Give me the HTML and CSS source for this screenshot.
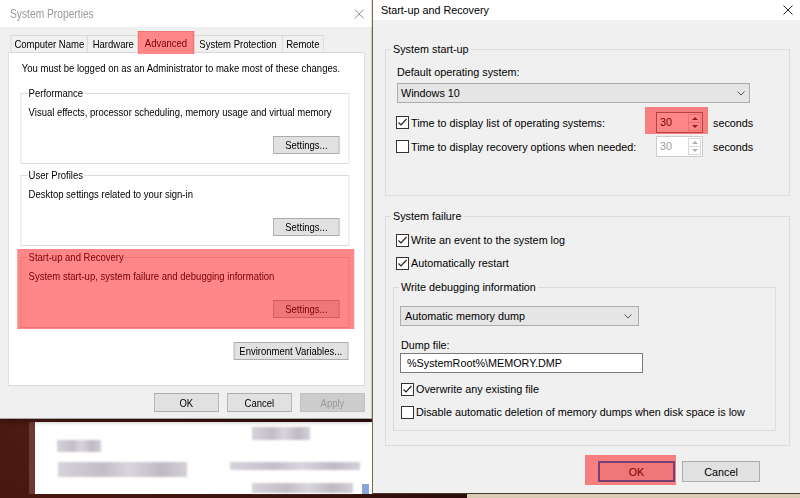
FILE: index.html
```html
<!DOCTYPE html>
<html lang="en">
<head>
    <meta charset="UTF-8">
    <title>System Properties - Start-up and Recovery</title>
    <link rel="stylesheet" href="styles.css">
</head>
<body>

    <!-- window sitting behind the dialogs (blurred in the screenshot) -->
    <div class="backdrop-window">
        <span class="smudge sm1"></span>
        <span class="smudge sm2"></span>
        <span class="smudge sm3"></span>
        <span class="smudge sm4"></span>
        <span class="smudge sm5"></span>
        <span class="app-icon"></span>
    </div>
    <div class="backdrop-edge"></div>

    <section class="dialog sysprops">
        <header class="titlebar">
            <span class="title">System Properties</span>
            <svg class="close" width="12.2" height="10" viewBox="0 0 10 10" preserveAspectRatio="none"><path d="M0.5 0.5 L9.5 9.5 M9.5 0.5 L0.5 9.5"/></svg>
        </header>

        <nav class="tabs">
            <span class="tab tab-name">Computer Name</span>
            <span class="tab tab-hw">Hardware</span>
            <span class="tab tab-adv active">Advanced</span>
            <span class="tab tab-sp">System Protection</span>
            <span class="tab tab-remote">Remote</span>
        </nav>

        <div class="panel">
            <p class="note">You must be logged on as an Administrator to make most of these changes.</p>

            <fieldset class="group">
                <legend>Performance</legend>
                <p>Visual effects, processor scheduling, memory usage and virtual memory</p>
                <div class="group-actions"><button class="btn btn-settings">Settings...</button></div>
            </fieldset>

            <fieldset class="group">
                <legend>User Profiles</legend>
                <p>Desktop settings related to your sign-in</p>
                <div class="group-actions"><button class="btn btn-settings">Settings...</button></div>
            </fieldset>

            <fieldset class="group">
                <legend>Start-up and Recovery</legend>
                <p>System start-up, system failure and debugging information</p>
                <div class="group-actions"><button class="btn btn-settings">Settings...</button></div>
            </fieldset>

            <div class="env-row"><button class="btn btn-env">Environment Variables...</button></div>
        </div>

        <footer class="dialog-buttons">
            <button class="btn">OK</button>
            <button class="btn">Cancel</button>
            <button class="btn" disabled>Apply</button>
        </footer>

        <span class="highlight hl-tab"></span>
        <span class="highlight hl-group"></span>
    </section>

    <section class="dialog recovery">
        <header class="titlebar">
            <span class="title">Start-up and Recovery</span>
            <svg class="close" width="10" height="10" viewBox="0 0 10 10"><path d="M0.5 0.5 L9.5 9.5 M9.5 0.5 L0.5 9.5"/></svg>
        </header>

        <div class="content">
            <fieldset class="group startup">
                <legend>System start-up</legend>
                <div class="field-label">Default operating system:</div>
                <div class="select select-os">
                    <span>Windows 10</span>
                    <svg width="8" height="5" viewBox="0 0 8 5"><path d="M0.5 0.5 L4 4 L7.5 0.5"/></svg>
                </div>

                <div class="spin-row">
                    <label class="check">
                        <span class="box"><svg width="11" height="11" viewBox="0 0 11 11"><path d="M1.5 5.5 L4 8 L9.5 2"/></svg></span>
                        Time to display list of operating systems:
                    </label>
                    <div class="spin">
                        <span class="spin-value">30</span>
                        <span class="spin-btns"><i class="up"></i><i class="down"></i></span>
                    </div>
                    <span class="unit">seconds</span>
                </div>

                <div class="spin-row">
                    <label class="check">
                        <span class="box"></span>
                        Time to display recovery options when needed:
                    </label>
                    <div class="spin disabled">
                        <span class="spin-value">30</span>
                        <span class="spin-btns"><i class="up"></i><i class="down"></i></span>
                    </div>
                    <span class="unit">seconds</span>
                </div>
            </fieldset>

            <fieldset class="group failure">
                <legend>System failure</legend>
                <label class="check">
                    <span class="box"><svg width="11" height="11" viewBox="0 0 11 11"><path d="M1.5 5.5 L4 8 L9.5 2"/></svg></span>
                    Write an event to the system log
                </label>
                <label class="check">
                    <span class="box"><svg width="11" height="11" viewBox="0 0 11 11"><path d="M1.5 5.5 L4 8 L9.5 2"/></svg></span>
                    Automatically restart
                </label>

                <fieldset class="group debug">
                    <legend>Write debugging information</legend>
                    <div class="select select-dump">
                        <span>Automatic memory dump</span>
                        <svg width="8" height="5" viewBox="0 0 8 5"><path d="M0.5 0.5 L4 4 L7.5 0.5"/></svg>
                    </div>
                    <div class="field-label dump-label">Dump file:</div>
                    <div class="textbox">%SystemRoot%\MEMORY.DMP</div>
                    <label class="check">
                        <span class="box"><svg width="11" height="11" viewBox="0 0 11 11"><path d="M1.5 5.5 L4 8 L9.5 2"/></svg></span>
                        Overwrite any existing file
                    </label>
                    <label class="check">
                        <span class="box"></span>
                        Disable automatic deletion of memory dumps when disk space is low
                    </label>
                </fieldset>
            </fieldset>

            <div class="dialog-buttons">
                <button class="btn btn-default">OK</button>
                <button class="btn btn-cancel">Cancel</button>
            </div>
        </div>

        <span class="highlight hl-spin"></span>
        <span class="highlight hl-ok"></span>
    </section>

</body>
</html>
```

FILE: styles.css
```css
* {
    box-sizing: border-box;
}

body {
    margin: 0;
    width: 800px;
    height: 498px;
    overflow: hidden;
    position: relative;
    background: radial-gradient(circle at 5% 85%, #4d1b12, #240908 60%);
    font-family: "Liberation Sans", Arial, sans-serif;
    color: #000;
}

p {
    margin: 0;
}

button {
    font: inherit;
    color: #000;
    padding: 0;
}

.btn {
    background: #e1e1e1;
    border: 1px solid #adadad;
    text-align: center;
    white-space: nowrap;
}

.btn:disabled {
    background: #cccccc;
    border-color: #bfbfbf;
    color: #9a9a9a;
}

fieldset.group {
    margin: 0;
    min-width: 0;
    border: 1px solid #dcdcdc;
}

legend {
    line-height: 14px;
}

.highlight {
    position: absolute;
    z-index: 5;
    background: rgba(255, 0, 0, 0.47);
    pointer-events: none;
}

.close path,
.select path {
    fill: none;
    stroke-width: 1;
}

/* ---------- things behind the dialogs ---------- */

.backdrop-window {
    position: absolute;
    left: 29px;
    top: 422px;
    width: 360px;
    height: 72px;
    background: #fff;
    border-left: 6px solid #6d3a31;
}

.smudge {
    position: absolute;
    background: linear-gradient(90deg, #d6d2da, #c3bdc8 35%, #d9d5dd 55%, #bfb9c4 80%, #d4d0d8);
    filter: blur(0.8px);
}

.sm1 { left: 22px; top: 18px; width: 44px; height: 12px; }
.sm2 { left: 23px; top: 40px; width: 129px; height: 15px; }
.sm3 { left: 217px; top: 5px; width: 58px; height: 13px; }
.sm4 { left: 195px; top: 40px; width: 130px; height: 8px; }
.sm5 { left: 217px; top: 61px; width: 101px; height: 10px; }

.app-icon {
    position: absolute;
    left: 327px;
    top: 62px;
    width: 7px;
    height: 10px;
    background: #8aa6d8;
    filter: blur(0.6px);
}

.backdrop-edge {
    position: absolute;
    left: 467px;
    top: 494px;
    width: 333px;
    height: 4px;
    background: #d9cbb4;
}

/* ---------- common dialog ---------- */

.dialog {
    position: absolute;
    top: 0;
    background: #f0f0f0;
    line-height: 14px;
}

.titlebar {
    display: flex;
    align-items: center;
    justify-content: space-between;
    background: #fff;
}

/* ---------- System Properties ---------- */
/* the screenshot squeezes this dialog sideways, so it is laid out
   wider and narrowed with scaleX(0.82); horizontal sizes are /0.82 */

.sysprops {
    left: 0;
    width: 453.7px;
    height: 419px;
    transform: scaleX(0.82);
    transform-origin: 0 0;
    border-right: 1px solid #a8a8a8;
    border-bottom: 1px solid #a8a8a8;
    box-shadow: 0 2px 6px rgba(0, 0, 0, 0.4);
    font-size: 11.6px;
    white-space: nowrap;
}

.sysprops .titlebar {
    height: 27px;
    padding: 0 8.5px 0 12.2px;
}

.sysprops .title {
    font-size: 12.5px;
    color: #999;
}

.sysprops .close path {
    stroke: #8a8a8a;
}

.tabs {
    display: flex;
    align-items: flex-end;
    height: 25px;
    padding-left: 13.4px;
}

.tab {
    display: flex;
    align-items: center;
    justify-content: center;
    height: 17px;
    border: 1px solid #d9d9d9;
    border-bottom: none;
    margin-left: -1px;
}

.tab-name { width: 93.5px; margin-left: 0; }
.tab-hw { width: 64.5px; }
.tab-sp { width: 109.5px; }
.tab-remote { width: 51px; }

.tab.active {
    position: relative;
    z-index: 1;
    width: 68px;
    height: 22px;
    margin-left: -2px;
    margin-bottom: -1px;
    background: #fff;
}

.panel {
    width: 435.4px;
    height: 334px;
    margin-left: 9.8px;
    padding: 8px 18.3px 0 14.6px;
    background: #fff;
    border: 1px solid #d9d9d9;
}

.note {
    margin: 0 0 11px 1.2px;
}

.sysprops .group {
    padding: 0 11px 9px 7.3px;
    margin-top: 4px;
}

.sysprops .group legend {
    padding: 0 1.2px;
}

.sysprops .group p {
    margin: 5px 0 0 1.2px;
}

.group-actions {
    display: flex;
    justify-content: flex-end;
    margin-top: 17px;
}

.btn-settings {
    width: 80.5px;
    height: 18px;
}

.env-row {
    display: flex;
    justify-content: flex-end;
    margin-top: 14px;
    padding-right: 1.2px;
}

.btn-env {
    width: 140.2px;
    height: 18px;
}

.sysprops .dialog-buttons {
    display: flex;
    justify-content: flex-end;
    gap: 9.8px;
    margin-top: 7px;
    padding-right: 7.6px;
}

.sysprops .dialog-buttons .btn {
    width: 79.3px;
    height: 19px;
}

.hl-tab { left: 168.3px; top: 31px; width: 68.3px; height: 23px; }
.hl-group { left: 20.7px; top: 249px; width: 411px; height: 80px; }

/* ---------- Start-up and Recovery ---------- */

.recovery {
    left: 372px;
    width: 428px;
    height: 494px;
    border-left: 1px solid #7a6548;
    border-bottom: 1px solid #4a3a2c;
    font-size: 10.8px;
}

.recovery .titlebar {
    height: 20px;
    padding: 0 7px 0 8px;
}

.recovery .close path {
    stroke: #222;
}

.content {
    padding: 22px 10px 0 12px;
}

.recovery .group legend {
    padding: 0 2px;
}

.startup {
    padding: 0 10px 38px 5px;
}

.field-label {
    margin: 9px 0 0 6px;
}

.select {
    display: flex;
    align-items: center;
    justify-content: space-between;
    height: 20px;
    background: #e5e5e5;
    border: 1px solid #adadad;
}

.select path {
    stroke: #555;
}

.select-os {
    width: 353px;
    margin: 4px 0 0 6px;
    padding: 0 4px 0 3px;
}

.spin-row {
    display: flex;
    align-items: center;
    height: 21px;
    margin: 9px 0 0 5px;
}

.spin-row + .spin-row {
    margin-top: 3px;
}

.check {
    display: flex;
    align-items: center;
    gap: 2px;
    height: 16px;
}

.spin-row .check {
    width: 260px;
}

.box {
    display: flex;
    align-items: center;
    justify-content: center;
    width: 13px;
    height: 13px;
    background: #fff;
    border: 1px solid #333;
}

.box path {
    fill: none;
    stroke: #222;
    stroke-width: 1.2;
}

.spin {
    display: flex;
    width: 47px;
    height: 21px;
    background: #fff;
    border: 1px solid #7a7a7a;
}

.spin-value {
    flex: 1;
    padding-left: 3px;
    line-height: 19px;
}

.spin-btns {
    display: flex;
    flex-direction: column;
    width: 15px;
    padding: 1px;
}

.spin-btns i {
    flex: 1;
    display: flex;
    align-items: center;
    justify-content: center;
    border: 1px solid #dadada;
}

.spin-btns .down {
    border-top: none;
}

.spin-btns .up::after,
.spin-btns .down::after {
    content: "";
    border-left: 3px solid transparent;
    border-right: 3px solid transparent;
}

.spin-btns .up::after {
    border-bottom: 3px solid #333;
}

.spin-btns .down::after {
    border-top: 3px solid #333;
}

.spin.disabled {
    border-color: #cccccc;
    color: #a0a0a0;
}

.spin.disabled .up::after {
    border-bottom-color: #b0b0b0;
}

.spin.disabled .down::after {
    border-top-color: #b0b0b0;
}

.unit {
    margin-left: 10px;
}

.failure {
    margin-top: 13px !important;
    padding: 0 13px 14px 5px;
}

.failure > .check {
    margin: 7px 0 0 5px;
}

.failure > .check:first-of-type {
    margin-top: 9px;
}

.debug {
    width: 383px;
    margin: 9px 0 0 2px !important;
    padding: 0 8px 10px 5px;
}

.select-dump {
    width: 239px;
    margin: 12px 0 0 1px;
    padding: 0 6px 0 4px;
}

.dump-label {
    margin: 12px 0 0 2px;
}

.textbox {
    width: 243px;
    height: 20px;
    margin: 1px 0 0 1px;
    padding-left: 6px;
    line-height: 18px;
    background: #fff;
    border: 1px solid #7a7a7a;
}

.debug .check {
    margin: 7px 0 0 2px;
}

.debug .textbox + .check {
    margin-top: 8px;
}

.recovery .dialog-buttons {
    display: flex;
    justify-content: flex-end;
    gap: 7px;
    margin-top: 15px;
    padding-right: 30px;
}

.recovery .dialog-buttons .btn {
    height: 21px;
}

.btn-default {
    width: 77px;
    border: 2px solid #0078d7;
}

.btn-cancel {
    width: 78px;
}

.hl-spin { left: 272px; top: 107px; width: 63px; height: 27px; }
.hl-ok { left: 212px; top: 455px; width: 91px; height: 30px; }
```
